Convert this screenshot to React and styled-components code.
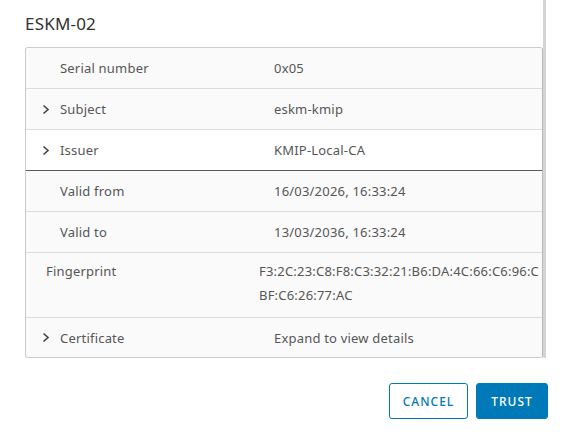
import React from "react";
import styled, { createGlobalStyle } from "styled-components";

const Global = createGlobalStyle`
  html, body { margin: 0; padding: 0; background: #fff; }
  body { font-family: "Noto Sans", "Open Sans", sans-serif; color: #565656; }
  * { box-sizing: border-box; }
`;

const Dialog = styled.div`
  width: 571px;
  height: 441px;
  display: flex;
  flex-direction: column;
`;

const ScrollArea = styled.div`
  display: flex;
  height: 358px;
`;

const Body = styled.div`
  flex: 0 0 543px;
  padding-left: 25px;
  overflow: hidden;
`;

const Scrollbar = styled.div`
  flex: 0 0 3px;
  background: #d4d4d4;
`;

const Title = styled.h3`
  margin: 0;
  height: 47px;
  padding-top: 11px;
  font-size: 17px;
  font-weight: 400;
  line-height: 26px;
  color: #313131;
  letter-spacing: 0.2px;
`;

const Grid = styled.div`
  width: 518px;
  border: 1px solid #ccc;
  border-right-color: #b8b8b8;
  border-radius: 3px;
  overflow: hidden;
  background: #fafafa;
`;

const Row = styled.div`
  display: grid;
  grid-template-columns: ${(p) => (p.$wide ? "233px 1fr" : "248px 1fr")};
  align-items: ${(p) => (p.$tall ? "start" : "center")};
  min-height: ${(p) => (p.$tall ? "65px" : "41px")};
  padding-top: ${(p) => (p.$tall ? "6px" : "0")};
  background: ${(p) => (p.$active ? "#fff" : "#fafafa")};
  border-bottom: 1px solid ${(p) => (p.$active ? "#5a5a5a" : "#d7dde1")};
  &:last-child { border-bottom: none; min-height: 39px; }
  font-size: 13px;
  line-height: 24px;
  letter-spacing: 0.2px;
`;

const Label = styled.div`
  display: flex;
  align-items: center;
  padding-left: ${(p) => p.$indent}px;
  gap: 10px;
  white-space: nowrap;
`;

const Value = styled.div`
  white-space: nowrap;
  overflow: hidden;
`;

const Chevron = styled.svg`
  width: 9px;
  height: 11px;
  flex: none;
`;

const Footer = styled.div`
  display: flex;
  justify-content: flex-end;
  gap: 8px;
  padding: 25px 23px 0 0;
`;

const Button = styled.button`
  height: 36px;
  min-width: ${(p) => (p.$primary ? "72px" : "79px")};
  padding: 0 12px;
  border: 1px solid #0079b8;
  border-radius: 3px;
  background: ${(p) => (p.$primary ? "#0079b8" : "#fff")};
  color: ${(p) => (p.$primary ? "#fff" : "#0079b8")};
  font-family: "Noto Sans", "Open Sans", sans-serif;
  font-size: 12px;
  font-weight: 500;
  letter-spacing: 1px;
  text-transform: uppercase;
`;

const Arrow = () => (
  <Chevron viewBox="0 0 9 11">
    <path d="M2.5 1.5 L7 5.5 L2.5 9.5" fill="none" stroke="#454545" strokeWidth="1.6" />
  </Chevron>
);

const rows = [
  { label: "Serial number", value: "0x05" },
  { label: "Subject", value: "eskm-kmip", expand: true },
  { label: "Issuer", value: "KMIP-Local-CA", expand: true, active: true },
  { label: "Valid from", value: "16/03/2026, 16:33:24" },
  { label: "Valid to", value: "13/03/2036, 16:33:24" },
];

export default function App() {
  return (
    <>
      <Global />
      <Dialog>
        <ScrollArea>
          <Body>
            <Title>ESKM-02</Title>
            <Grid>
              {rows.map((r) => (
                <Row key={r.label} $active={r.active}>
                  <Label $indent={r.expand ? 15 : 34}>
                    {r.expand && <Arrow />}
                    {r.label}
                  </Label>
                  <Value>{r.value}</Value>
                </Row>
              ))}
              <Row $tall $wide>
                <Label $indent={20}>Fingerprint</Label>
                <Value>
                  F3:2C:23:C8:F8:C3:32:21:B6:DA:4C:66:C6:96:C
                  <br />
                  BF:C6:26:77:AC
                </Value>
              </Row>
              <Row>
                <Label $indent={15}>
                  <Arrow />
                  Certificate
                </Label>
                <Value>Expand to view details</Value>
              </Row>
            </Grid>
          </Body>
          <Scrollbar />
        </ScrollArea>
        <Footer>
          <Button>Cancel</Button>
          <Button $primary>Trust</Button>
        </Footer>
      </Dialog>
    </>
  );
}
